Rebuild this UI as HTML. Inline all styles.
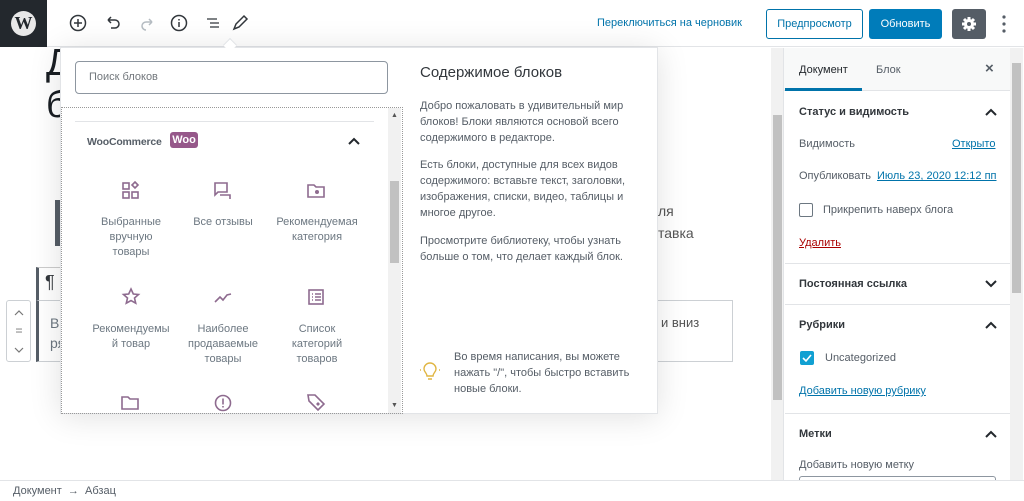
<!DOCTYPE html>
<html><head><meta charset="utf-8"><style>
*{box-sizing:border-box;margin:0;padding:0}
body{width:1024px;height:501px;overflow:hidden;position:relative;background:#fff;font-family:"Liberation Sans","DejaVu Sans",sans-serif;color:#555d66}
.a{position:absolute}
.t{font-size:11px;white-space:nowrap}
svg{display:block}
.ic{stroke:#8e6b8f;fill:none;stroke-width:1.6}
.bi{position:absolute;text-align:center;font-size:11px;line-height:15px;color:#6c7781;width:100px}
.sec{position:absolute;left:785px;width:225px;border-top:1px solid #e2e4e7}
.h{font-size:11px;font-weight:bold;color:#32373c}
.lnk{color:#0073aa;text-decoration:underline}
</style></head><body>
<div class="a" style="left:0;top:0;width:1024px;height:47px;border-bottom:1px solid #e2e4e7;background:#fff"></div>
<div class="a" style="left:0;top:0;width:47px;height:47px;background:#23282d"></div>
<div class="a" style="left:11px;top:11px;width:25px;height:25px;border-radius:50%;background:#e8e8e8;color:#23282d;font:bold 18px 'Liberation Serif',serif;text-align:center;line-height:25px">W</div>
<svg class="a" style="left:68px;top:13px" width="190" height="20" viewBox="0 0 190 20">
<g stroke="#32373c" fill="none" stroke-width="1.5">
<circle cx="10" cy="10" r="7.5"/><path d="M10 6v8M6 10h8"/>
<path d="M40 7h7a4 4 0 0 1 0 8h-4M40 7l3-3M40 7l3 3"/>
<path d="M84 9h-6a4 4 0 0 0 0 8" stroke="#b5bcc2"/><path d="M84 9l-3-3M84 9l-3 3" stroke="#b5bcc2"/>
<circle cx="111" cy="10" r="7.5"/><path d="M111 9v5M111 6v1.5"/>
<path d="M139 6h3M142 10h9M142 14h9M139 6h10" stroke-width="1.3"/>
<path d="M166 16l2-5 8-8 3 3-8 8z"/>
</g></svg>
<div class="a" style="left:225px;top:40px;width:10px;height:10px;background:#fff;border-left:1px solid #e2e4e7;border-top:1px solid #e2e4e7;transform:rotate(45deg);z-index:5"></div>
<div class="a t" style="left:597px;top:17px;color:#0073aa">Переключиться на черновик</div>
<div class="a t" style="left:766px;top:9px;width:97px;height:30px;border:1px solid #0073aa;border-radius:3px;color:#0073aa;text-align:center;line-height:28px">Предпросмотр</div>
<div class="a t" style="left:869px;top:9px;width:73px;height:30px;background:#007cba;border-radius:3px;color:#fff;text-align:center;line-height:30px">Обновить</div>
<div class="a" style="left:952px;top:9px;width:34px;height:30px;background:#555d66;border-radius:3px"></div>
<svg class="a" style="left:960px;top:15px" width="18" height="18" viewBox="0 0 18 18"><circle cx="9" cy="9" r="5" fill="#fff"/><g stroke="#fff" stroke-width="3"><path d="M9 2v14M2 9h14M4 4l10 10M14 4L4 14"/></g><circle cx="9" cy="9" r="2" fill="#555d66"/></svg>
<svg class="a" style="left:1001px;top:14px" width="6" height="20"><circle cx="3" cy="3" r="1.6" fill="#555d66"/><circle cx="3" cy="10" r="1.6" fill="#555d66"/><circle cx="3" cy="17" r="1.6" fill="#555d66"/></svg>

<div class="a" style="left:46px;top:42px;font-size:38px;color:#191e23;line-height:42px">Д<br>б</div>
<div class="a" style="left:55px;top:200px;width:8px;height:46px;background:#555d66"></div>
<div class="a" style="left:658px;top:200px;font-size:14px;color:#555;line-height:22px">ля<br>тавка</div>
<div class="a" style="left:36px;top:267px;width:26px;height:34px;border-left:3px solid #555d66;border-top:1px solid #ccc"></div>
<div class="a" style="left:45px;top:272px;font-size:18px;color:#32373c">¶</div>
<div class="a" style="left:36px;top:300px;width:697px;height:62px;border:1px solid #ccd0d4;border-left:3px solid #555d66"></div>
<div class="a" style="left:50px;top:313px;font-size:14px;color:#6c7781;line-height:20px">В<br>ря</div>
<div class="a" style="left:661px;top:315px;font-size:13px;color:#555">и вниз</div>
<div class="a" style="left:6px;top:300px;width:25px;height:62px;border:1px solid #ccd0d4;border-radius:3px;background:#fff"></div>
<svg class="a" style="left:12px;top:305px" width="14" height="52"><g stroke="#777" fill="none" stroke-width="1.2"><path d="M3 10l4-4 4 4M3 43l4 4 4-4" /></g><g fill="#777"><circle cx="5" cy="24" r=".8"/><circle cx="7" cy="24" r=".8"/><circle cx="9" cy="24" r=".8"/><circle cx="5" cy="27" r=".8"/><circle cx="7" cy="27" r=".8"/><circle cx="9" cy="27" r=".8"/></g></svg>
<div class="a" style="left:771px;top:48px;width:12px;height:432px;background:#f1f1f1"></div>
<div class="a" style="left:773px;top:115px;width:9px;height:285px;background:#c1c1c1"></div>

<div class="a" style="left:60px;top:47px;width:598px;height:367px;background:#fff;border:1px solid #e2e4e7;box-shadow:0 3px 30px rgba(0,0,0,.12)"></div>
<div class="a" style="left:75px;top:61px;width:313px;height:33px;border:1px solid #8d96a0;border-radius:4px"></div>
<div class="a t" style="left:89px;top:71px;color:#72777c">Поиск блоков</div>
<div class="a" style="left:61px;top:107px;width:342px;height:307px;border:1px dotted #999"></div>
<div class="a" style="left:75px;top:121px;width:299px;height:1px;background:#e2e4e7"></div>
<div class="a t" style="left:87px;top:136px;font-weight:bold;color:#555d66;font-size:10.5px;letter-spacing:-0.2px">WooCommerce</div>
<div class="a" style="left:170px;top:132px;width:28px;height:16px;background:#96588a;border-radius:3px;color:#fff;font:bold 11px 'Liberation Sans',sans-serif;text-align:center;line-height:16px">Woo</div>
<svg class="a" style="left:348px;top:137px" width="12" height="8"><path d="M1 7l5-5 5 5" stroke="#23282d" stroke-width="2" fill="none"/></svg>
<svg class="a" style="left:121px;top:181px" width="20" height="20"><g class="ic"><rect x="2" y="2" width="6" height="6"/><rect x="2" y="11" width="6" height="6"/><rect x="11" y="11" width="6" height="6"/><path d="M14 1l3 3-3 3-3-3z"/></g></svg>
<svg class="a" style="left:213px;top:181px" width="20" height="20"><g class="ic"><path d="M2 2h12v9H5l-3 3z"/><path d="M7 14h10v4"/></g></svg>
<svg class="a" style="left:306px;top:181px" width="20" height="20"><g class="ic"><path d="M2 4h6l2 2h8v10H2z"/></g><circle cx="11" cy="11" r="2" fill="#8e6b8f"/></svg>
<div class="bi" style="left:81px;top:215px">Выбранные<br>вручную<br>товары</div>
<div class="bi" style="left:173px;top:215px">Все отзывы</div>
<div class="bi" style="left:267px;top:215px">Рекомендуемая<br>категория</div>
<svg class="a" style="left:121px;top:287px" width="20" height="20"><path class="ic" d="M10 2l2.3 5 5.2.5-4 3.5 1.2 5.2L10 13.5 5.3 16.2 6.5 11l-4-3.5 5.2-.5z"/></svg>
<svg class="a" style="left:213px;top:287px" width="20" height="20"><path class="ic" d="M2 15l5-5 3 3 4-5 4-1"/></svg>
<svg class="a" style="left:306px;top:287px" width="20" height="20"><g class="ic"><rect x="3" y="3" width="14" height="14"/><path d="M6 7h1M9 7h6M6 10h1M9 10h6M6 13h1M9 13h6"/></g></svg>
<div class="bi" style="left:81px;top:322px">Рекомендуемы<br>й товар</div>
<div class="bi" style="left:173px;top:322px">Наиболее<br>продаваемые<br>товары</div>
<div class="bi" style="left:267px;top:322px">Список<br>категорий<br>товаров</div>
<svg class="a" style="left:120px;top:394px" width="20" height="18"><path class="ic" d="M2 3h6l2 2h8v10H2z"/></svg>
<svg class="a" style="left:213px;top:393px" width="20" height="20"><g class="ic"><circle cx="10" cy="10" r="7.5"/><path d="M10 5.5v6M10 13v1.5"/></g></svg>
<svg class="a" style="left:305px;top:392px" width="22" height="20"><g class="ic"><path d="M3 3h7l9 9-6 6-9-9z"/></g><path d="M11 12l2-2 2 2-2 2z" fill="#8e6b8f"/></svg>
<div class="a" style="left:388px;top:108px;width:13px;height:305px;background:#f1f1f1"></div>
<div class="a" style="left:390px;top:181px;width:9px;height:82px;background:#c1c1c1"></div>
<div class="a" style="left:391px;top:112px;font-size:7px;color:#555">▲</div>
<div class="a" style="left:391px;top:402px;font-size:7px;color:#555">▼</div>

<div class="a" style="left:420px;top:64px;font-size:15px;color:#32373c">Содержимое блоков</div>
<div class="a" style="left:420px;top:98px;font-size:11px;line-height:16px;color:#555d66;width:230px">Добро пожаловать в удивительный мир блоков! Блоки являются основой всего содержимого в редакторе.</div>
<div class="a" style="left:420px;top:157px;font-size:11px;line-height:16px;color:#555d66;width:230px">Есть блоки, доступные для всех видов содержимого: вставьте текст, заголовки, изображения, списки, видео, таблицы и многое другое.</div>
<div class="a" style="left:420px;top:233px;font-size:11px;line-height:16px;color:#555d66;width:230px">Просмотрите библиотеку, чтобы узнать больше о том, что делает каждый блок.</div>
<svg class="a" style="left:420px;top:362px" width="20" height="20"><g stroke="#e0b542" fill="none" stroke-width="1.4"><path d="M7 14c0-3-3-4-3-7a6 6 0 0 1 12 0c0 3-3 4-3 7zM8 17h4"/><path d="M1 8H0M20 8h-1"/></g></svg>
<div class="a" style="left:454px;top:349px;font-size:11px;line-height:16px;color:#555d66;width:200px">Во время написания, вы можете нажать "/", чтобы быстро вставить новые блоки.</div>

<div class="a" style="left:783px;top:48px;width:1px;height:432px;background:#e2e4e7"></div>
<div class="a" style="left:784px;top:48px;width:226px;height:43px;background:#f8f9f9;border-bottom:1px solid #e2e4e7"></div>
<div class="a t" style="left:799px;top:64px;color:#23282d">Документ</div>
<div class="a t" style="left:876px;top:64px;color:#555d66">Блок</div>
<div class="a" style="left:985px;top:60px;font-size:15px;color:#555d66;font-weight:bold">×</div>
<div class="a" style="left:785px;top:88px;width:77px;height:3px;background:#0073aa"></div>
<div class="a h" style="left:799px;top:106px">Статус и видимость</div>
<svg class="a" style="left:985px;top:108px" width="12" height="8"><path d="M1 7l5-5 5 5" stroke="#23282d" stroke-width="2" fill="none"/></svg>
<div class="a t" style="left:799px;top:138px">Видимость</div>
<div class="a t lnk" style="left:952px;top:138px">Открыто</div>
<div class="a t" style="left:799px;top:170px">Опубликовать</div>
<div class="a t lnk" style="left:877px;top:170px">Июль 23, 2020 12:12 пп</div>
<div class="a" style="left:799px;top:203px;width:14px;height:14px;border:1.5px solid #6c7781;border-radius:2px"></div>
<div class="a t" style="left:823px;top:204px">Прикрепить наверх блога</div>
<div class="a t" style="left:799px;top:237px;color:#a00;text-decoration:underline">Удалить</div>
<div class="sec" style="top:263px"></div>
<div class="a h" style="left:799px;top:278px">Постоянная ссылка</div>
<svg class="a" style="left:985px;top:280px" width="12" height="8"><path d="M1 1l5 5 5-5" stroke="#23282d" stroke-width="2" fill="none"/></svg>
<div class="sec" style="top:304px"></div>
<div class="a h" style="left:799px;top:319px">Рубрики</div>
<svg class="a" style="left:985px;top:321px" width="12" height="8"><path d="M1 7l5-5 5 5" stroke="#23282d" stroke-width="2" fill="none"/></svg>
<div class="a" style="left:800px;top:351px;width:14px;height:14px;background:#11a0d2;border-radius:2px"></div>
<svg class="a" style="left:801px;top:352px" width="12" height="12"><path d="M2 6l3 3 5-6" stroke="#fff" stroke-width="1.6" fill="none"/></svg>
<div class="a t" style="left:825px;top:352px">Uncategorized</div>
<div class="a t lnk" style="left:799px;top:385px">Добавить новую рубрику</div>
<div class="sec" style="top:413px"></div>
<div class="a h" style="left:799px;top:428px">Метки</div>
<svg class="a" style="left:985px;top:430px" width="12" height="8"><path d="M1 7l5-5 5 5" stroke="#23282d" stroke-width="2" fill="none"/></svg>
<div class="a t" style="left:799px;top:459px">Добавить новую метку</div>
<div class="a" style="left:799px;top:476px;width:197px;height:10px;border:1px solid #8d96a0;border-bottom:none;border-radius:3px 3px 0 0"></div>
<div class="a" style="left:1010px;top:48px;width:13px;height:432px;background:#f1f1f1"></div>
<div class="a" style="left:1012px;top:63px;width:9px;height:230px;background:#c1c1c1"></div>

<div class="a" style="left:0;top:480px;width:1024px;height:21px;background:#fff;border-top:1px solid #e2e4e7"></div>
<div class="a t" style="left:13px;top:485px;color:#555d66">Документ &nbsp;→&nbsp; Абзац</div>
</body></html>
